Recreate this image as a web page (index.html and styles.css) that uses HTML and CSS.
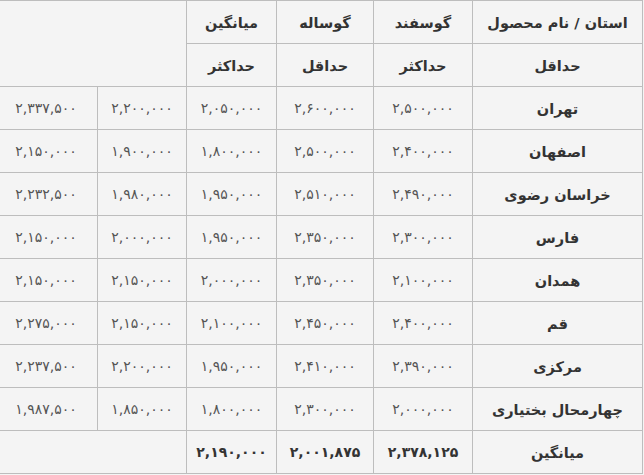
FILE: index.html
```html
<!DOCTYPE html>
<html lang="fa" dir="rtl">
<head>
<meta charset="utf-8">
<title>قیمت دام</title>
<link rel="stylesheet" href="styles.css">
</head>
<body>
<div class="wrap">
<table class="prices">
<colgroup>
<col class="c-name"><col class="c-a"><col class="c-b"><col class="c-c"><col class="c-d"><col class="c-e">
</colgroup>
<thead>
<tr>
<th>استان / نام محصول</th>
<th>گوسفند</th>
<th>گوساله</th>
<th>میانگین</th>
<th rowspan="2" colspan="2"></th>
</tr>
<tr>
<th>حداقل</th>
<th>حداکثر</th>
<th>حداقل</th>
<th>حداکثر</th>
</tr>
</thead>
<tbody>
<tr><th>تهران</th><td>۲,۵۰۰,۰۰۰</td><td>۲,۶۰۰,۰۰۰</td><td>۲,۰۵۰,۰۰۰</td><td>۲,۲۰۰,۰۰۰</td><td>۲,۳۳۷,۵۰۰</td></tr>
<tr><th>اصفهان</th><td>۲,۴۰۰,۰۰۰</td><td>۲,۵۰۰,۰۰۰</td><td>۱,۸۰۰,۰۰۰</td><td>۱,۹۰۰,۰۰۰</td><td>۲,۱۵۰,۰۰۰</td></tr>
<tr><th>خراسان رضوی</th><td>۲,۴۹۰,۰۰۰</td><td>۲,۵۱۰,۰۰۰</td><td>۱,۹۵۰,۰۰۰</td><td>۱,۹۸۰,۰۰۰</td><td>۲,۲۳۲,۵۰۰</td></tr>
<tr><th>فارس</th><td>۲,۳۰۰,۰۰۰</td><td>۲,۳۵۰,۰۰۰</td><td>۱,۹۵۰,۰۰۰</td><td>۲,۰۰۰,۰۰۰</td><td>۲,۱۵۰,۰۰۰</td></tr>
<tr><th>همدان</th><td>۲,۱۰۰,۰۰۰</td><td>۲,۳۵۰,۰۰۰</td><td>۲,۰۰۰,۰۰۰</td><td>۲,۱۵۰,۰۰۰</td><td>۲,۱۵۰,۰۰۰</td></tr>
<tr><th>قم</th><td>۲,۴۰۰,۰۰۰</td><td>۲,۴۵۰,۰۰۰</td><td>۲,۱۰۰,۰۰۰</td><td>۲,۱۵۰,۰۰۰</td><td>۲,۲۷۵,۰۰۰</td></tr>
<tr><th>مرکزی</th><td>۲,۳۹۰,۰۰۰</td><td>۲,۴۱۰,۰۰۰</td><td>۱,۹۵۰,۰۰۰</td><td>۲,۲۰۰,۰۰۰</td><td>۲,۲۳۷,۵۰۰</td></tr>
<tr><th>چهارمحال بختیاری</th><td>۲,۰۰۰,۰۰۰</td><td>۲,۳۰۰,۰۰۰</td><td>۱,۸۰۰,۰۰۰</td><td>۱,۸۵۰,۰۰۰</td><td>۱,۹۸۷,۵۰۰</td></tr>
<tr class="avg"><th>میانگین</th><td>۲,۳۷۸,۱۲۵</td><td>۲,۰۰۱,۸۷۵</td><td>۲,۱۹۰,۰۰۰</td><td colspan="2"></td></tr>
</tbody>
</table>
</div>
</body>
</html>
```

FILE: styles.css
```css
html, body {
  margin: 0;
  padding: 0;
  background: #f4f4f4;
}

.wrap {
  direction: rtl;
  overflow: hidden;
  padding-right: 1px;
  height: 475px;
}

.prices {
  border-collapse: collapse;
  table-layout: fixed;
  width: 648px;
  background: #f4f4f4;
  font-family: "DejaVu Sans", sans-serif;
  color: #444;
}

.c-name { width: 170px; }
.c-a { width: 99px; }
.c-b { width: 97px; }
.c-c { width: 90px; }
.c-d { width: 89px; }
.c-e { width: 103px; }

.prices th,
.prices td {
  border: 1px solid #bdbdbd;
  height: 42px;
  padding: 0;
  text-align: center;
  vertical-align: middle;
  white-space: nowrap;
}

.prices th {
  height: 40px;
  font-size: 14.5px;
  font-weight: bold;
  color: #333;
  padding-top: 2px;
}

.prices td {
  font-size: 14px;
  color: #555;
}

.prices .avg td {
  font-weight: bold;
  color: #333;
}
```
